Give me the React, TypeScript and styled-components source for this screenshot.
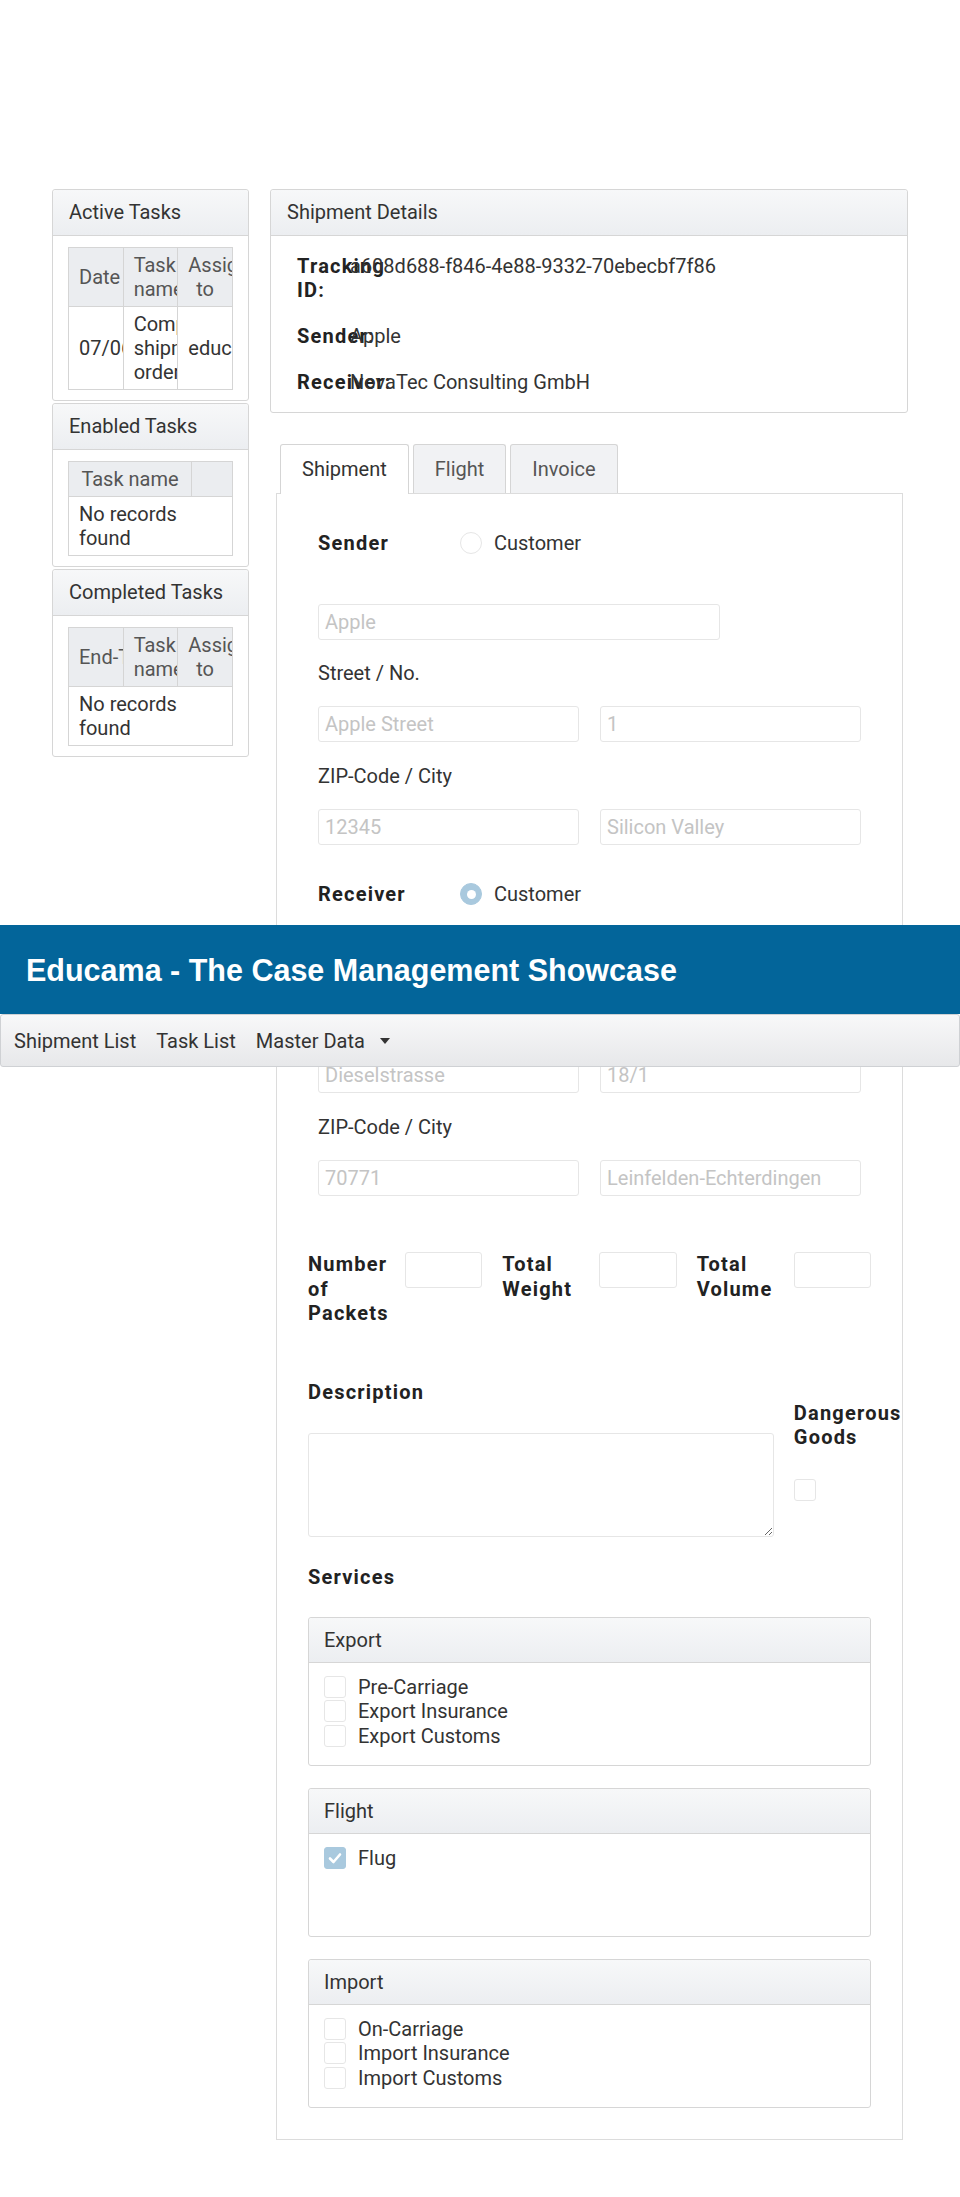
import React from "react";
import styled, { createGlobalStyle } from "styled-components";

const GlobalStyle = createGlobalStyle`
  html, body { margin: 0; padding: 0; background: #fff; }
  body {
    font-family: Roboto, "Liberation Sans", Arial, sans-serif;
    font-size: 20px;
    line-height: 24px;
    color: #333;
  }
  * { box-sizing: border-box; }
`;

const Page = styled.div`
  position: relative;
  min-height: 2197px;
  padding: 189px 52px 57px;
  display: grid;
  grid-template-columns: 197px 1fr;
  column-gap: 21px;
  align-items: start;
`;

const SideColumn = styled.div`
  display: flex;
  flex-direction: column;
  gap: 2px;
`;

const MainColumn = styled.div`
  display: flex;
  flex-direction: column;
`;

const Panel = styled.section`
  border: 1px solid #d6d6d6;
  border-radius: 3px;
  background: #fff;
`;

const PanelHeader = styled.div`
  padding: 10px 16px 11px;
  background: linear-gradient(#f7f8f9, #eceef1);
  border-bottom: 1px solid #d6d6d6;
  border-radius: 3px 3px 0 0;
  color: #333;
`;

const PanelBody = styled.div`
  padding: 11px 15px 10px;
`;

const TaskTable = styled.table`
  width: 100%;
  table-layout: fixed;
  border-collapse: collapse;
`;

const Col = styled.col<{ $w: string }>`
  width: ${(p) => p.$w};
`;

const Th = styled.th<{ $nowrap?: boolean }>`
  background: #ebedf0;
  color: #555;
  font-weight: normal;
  text-align: center;
  vertical-align: middle;
  padding: 5px 10px;
  border: 1px solid #d5d5d5;
  overflow: hidden;
  white-space: ${(p) => (p.$nowrap ? "nowrap" : "normal")};
`;

const Td = styled.td`
  color: #333;
  text-align: left;
  vertical-align: middle;
  padding: 5px 10px;
  border: 1px solid #d5d5d5;
  overflow: hidden;
`;

const DetailsGrid = styled.dl`
  margin: 0;
  padding: 7px 26px;
  display: grid;
  grid-template-columns: 53px 1fr;
`;

const DetailLabel = styled.dt`
  font-weight: 700;
  letter-spacing: 1.2px;
  color: #222;
  padding: 11px 0;
`;

const DetailValue = styled.dd`
  margin: 0;
  padding: 11px 0;
  color: #333;
`;

const TabView = styled.div`
  margin: 31px 5px 0 6px;
`;

const TabList = styled.div`
  display: flex;
  gap: 4px;
  padding-left: 4px;
`;

const Tab = styled.div<{ $active?: boolean }>`
  position: relative;
  z-index: 1;
  padding: 12px 21px ${(p) => (p.$active ? "13px" : "12px")};
  margin-bottom: ${(p) => (p.$active ? "-1px" : "0")};
  border: 1px solid #d5d5d5;
  border-bottom: none;
  border-radius: 3px 3px 0 0;
  background: ${(p) => (p.$active ? "#fff" : "#f1f2f4")};
  color: ${(p) => (p.$active ? "#333" : "#555")};
`;

const TabPanel = styled.div`
  border: 1px solid #dcdcdc;
  padding: 31px;
  display: flex;
  flex-direction: column;
`;

const PartyBlock = styled.div<{ $top?: number }>`
  padding: 0 10px;
  margin-top: ${(p) => p.$top ?? 0}px;
  display: flex;
  flex-direction: column;
`;

const PartyRow = styled.div`
  height: 36px;
  display: flex;
  align-items: center;
`;

const BoldLabel = styled.span`
  font-weight: 700;
  letter-spacing: 1.2px;
  color: #222;
`;

const PartyLabel = styled(BoldLabel)`
  width: 142px;
`;

const Radio = styled.span<{ $checked?: boolean }>`
  width: 22px;
  height: 22px;
  border-radius: 50%;
  border: 1px solid ${(p) => (p.$checked ? "#a9c9de" : "#e6e6e6")};
  background: ${(p) => (p.$checked ? "#a9c9de" : "#fff")};
  margin-right: 12px;
  display: inline-flex;
  align-items: center;
  justify-content: center;
  &::after {
    content: "";
    display: ${(p) => (p.$checked ? "block" : "none")};
    width: 9px;
    height: 9px;
    border-radius: 50%;
    background: #fff;
  }
`;

const TextField = styled.input<{ $w?: number; $top?: number }>`
  display: block;
  width: ${(p) => (p.$w ? `${p.$w}px` : "100%")};
  min-width: 0;
  height: 36px;
  margin: ${(p) => p.$top ?? 0}px 0 0;
  padding: 0 6px;
  border: 1px solid #e6e6e6;
  border-radius: 3px;
  background: #fff;
  font: inherit;
  color: #c4c4c4;
  outline: none;
`;

const FieldLabel = styled.div<{ $top: number }>`
  margin-top: ${(p) => p.$top}px;
  color: #333;
`;

const InputPair = styled.div`
  margin-top: 21px;
  display: grid;
  grid-template-columns: 1fr 1fr;
  column-gap: 21px;
`;

const SixGrid = styled.div<{ $top: number }>`
  margin-top: ${(p) => p.$top}px;
  display: grid;
  grid-template-columns: repeat(6, minmax(0, 1fr));
  column-gap: 20px;
  align-items: start;
`;

const GridLabel = styled(BoldLabel)`
  display: block;
  line-height: 24.5px;
  white-space: normal;
`;

const DescCell = styled.div`
  grid-column: span 5;
  display: flex;
  flex-direction: column;
  min-width: 0;
`;

const DescArea = styled.textarea`
  margin-top: 29px;
  height: 104px;
  width: 100%;
  border: 1px solid #e6e6e6;
  border-radius: 3px;
  font: inherit;
  resize: both;
  outline: none;
`;

const DangerCell = styled.div`
  padding-top: 21px;
  display: flex;
  flex-direction: column;
  align-items: flex-start;
  min-width: 0;
`;

const DangerLabel = styled(BoldLabel)`
  display: block;
  line-height: 24px;
`;

const Box = styled.span<{ $checked?: boolean; $top?: number }>`
  width: 22px;
  height: 22px;
  flex: none;
  margin-top: ${(p) => p.$top ?? 0}px;
  border: 1px solid ${(p) => (p.$checked ? "#a9c9de" : "#e6e6e6")};
  border-radius: 3px;
  background: ${(p) => (p.$checked ? "#a9c9de" : "#fff")};
  display: inline-flex;
  align-items: center;
  justify-content: center;
`;

const SectionTitle = styled(BoldLabel)<{ $top: number }>`
  display: block;
  margin-top: ${(p) => p.$top}px;
`;

const ServiceList = styled.div`
  margin-top: 28px;
  display: flex;
  flex-direction: column;
  gap: 22px;
`;

const ServicePanel = styled.section`
  border: 1px solid #d6d6d6;
  border-radius: 3px;
`;

const ServiceHeader = styled.div`
  padding: 10px 15px;
  background: linear-gradient(#f7f8f9, #eceef1);
  border-bottom: 1px solid #d6d6d6;
  border-radius: 3px 3px 0 0;
  color: #333;
`;

const ServiceBody = styled.div`
  min-height: 102px;
  padding: 12px 15px;
`;

const CheckItem = styled.label`
  display: flex;
  align-items: center;
  gap: 12px;
  line-height: 24.5px;
  color: #333;
`;

const TopBar = styled.header`
  position: absolute;
  top: 925px;
  left: 0;
  width: 100%;
`;

const TitleBar = styled.div`
  height: 89px;
  background: #03659a;
  display: flex;
  align-items: center;
  padding-left: 26px;
`;

const Title = styled.h1`
  margin: 0;
  font-family: "Liberation Sans", Arial, sans-serif;
  font-weight: 700;
  font-size: 30.5px;
  line-height: 36px;
  color: #fff;
`;

const NavBar = styled.nav`
  height: 53px;
  border: 1px solid #cfd1d4;
  border-radius: 3px;
  background: linear-gradient(#f8f8f9, #e7e8ea);
  display: flex;
  align-items: center;
  padding-left: 3px;
`;

const NavItem = styled.span`
  padding: 0 10px;
  color: #333;
  display: inline-flex;
  align-items: center;
`;

const Caret = styled.span`
  margin-left: 15px;
  width: 0;
  height: 0;
  border-left: 5px solid transparent;
  border-right: 5px solid transparent;
  border-top: 6px solid #333;
`;

const Check = () => (
  <svg width="16" height="16" viewBox="0 0 16 16" aria-hidden="true">
    <path d="M3 8.5 L6.5 12 L13 4.5" fill="none" stroke="#fff" strokeWidth="2.6" strokeLinecap="round" strokeLinejoin="round" />
  </svg>
);

type Party = {
  label: string;
  checked?: boolean;
  name: string;
  street: string;
  no: string;
  zip: string;
  city: string;
};

const PartySection = ({ p, top }: { p: Party; top?: number }) => (
  <PartyBlock $top={top}>
    <PartyRow>
      <PartyLabel>{p.label}</PartyLabel>
      <Radio $checked={p.checked} />
      <span>Customer</span>
    </PartyRow>
    <TextField readOnly value={p.name} $w={402} $top={43} />
    <FieldLabel $top={21}>Street / No.</FieldLabel>
    <InputPair>
      <TextField readOnly value={p.street} />
      <TextField readOnly value={p.no} />
    </InputPair>
    <FieldLabel $top={22}>ZIP-Code / City</FieldLabel>
    <InputPair>
      <TextField readOnly value={p.zip} />
      <TextField readOnly value={p.city} />
    </InputPair>
  </PartyBlock>
);

const services = [
  { title: "Export", items: [["Pre-Carriage", false], ["Export Insurance", false], ["Export Customs", false]] },
  { title: "Flight", items: [["Flug", true]] },
  { title: "Import", items: [["On-Carriage", false], ["Import Insurance", false], ["Import Customs", false]] },
] as const;

export default function App() {
  return (
    <>
      <GlobalStyle />
      <Page>
        <SideColumn>
          <Panel>
            <PanelHeader>Active Tasks</PanelHeader>
            <PanelBody>
              <TaskTable>
                <thead>
                  <tr>
                    <Th>Date</Th>
                    <Th>Task name</Th>
                    <Th>Assigned to</Th>
                  </tr>
                </thead>
                <tbody>
                  <tr>
                    <Td>07/06/2017</Td>
                    <Td>Complete shipment order</Td>
                    <Td>educama</Td>
                  </tr>
                </tbody>
              </TaskTable>
            </PanelBody>
          </Panel>
          <Panel>
            <PanelHeader>Enabled Tasks</PanelHeader>
            <PanelBody>
              <TaskTable>
                <colgroup>
                  <Col $w="75%" />
                  <Col $w="25%" />
                </colgroup>
                <thead>
                  <tr>
                    <Th>Task name</Th>
                    <Th></Th>
                  </tr>
                </thead>
                <tbody>
                  <tr>
                    <Td colSpan={2}>No records found</Td>
                  </tr>
                </tbody>
              </TaskTable>
            </PanelBody>
          </Panel>
          <Panel>
            <PanelHeader>Completed Tasks</PanelHeader>
            <PanelBody>
              <TaskTable>
                <thead>
                  <tr>
                    <Th $nowrap>End-Time</Th>
                    <Th>Task name</Th>
                    <Th>Assigned to</Th>
                  </tr>
                </thead>
                <tbody>
                  <tr>
                    <Td colSpan={3}>No records found</Td>
                  </tr>
                </tbody>
              </TaskTable>
            </PanelBody>
          </Panel>
        </SideColumn>

        <MainColumn>
          <Panel>
            <PanelHeader>Shipment Details</PanelHeader>
            <DetailsGrid>
              <DetailLabel>Tracking ID:</DetailLabel>
              <DetailValue>a608d688-f846-4e88-9332-70ebecbf7f86</DetailValue>
              <DetailLabel>Sender:</DetailLabel>
              <DetailValue>Apple</DetailValue>
              <DetailLabel>Receiver:</DetailLabel>
              <DetailValue>NovaTec Consulting GmbH</DetailValue>
            </DetailsGrid>
          </Panel>

          <TabView>
            <TabList>
              <Tab $active>Shipment</Tab>
              <Tab>Flight</Tab>
              <Tab>Invoice</Tab>
            </TabList>
            <TabPanel>
              <PartySection
                p={{ label: "Sender", name: "Apple", street: "Apple Street", no: "1", zip: "12345", city: "Silicon Valley" }}
              />
              <PartySection
                top={31}
                p={{
                  label: "Receiver",
                  checked: true,
                  name: "NovaTec Consulting GmbH",
                  street: "Dieselstrasse",
                  no: "18/1",
                  zip: "70771",
                  city: "Leinfelden-Echterdingen",
                }}
              />

              <SixGrid $top={56}>
                <GridLabel>Number of Packets</GridLabel>
                <TextField />
                <GridLabel>Total Weight</GridLabel>
                <TextField />
                <GridLabel>Total Volume</GridLabel>
                <TextField />
              </SixGrid>

              <SixGrid $top={54}>
                <DescCell>
                  <BoldLabel>Description</BoldLabel>
                  <DescArea />
                </DescCell>
                <DangerCell>
                  <DangerLabel>Dangerous Goods</DangerLabel>
                  <Box $top={30} />
                </DangerCell>
              </SixGrid>

              <SectionTitle $top={28}>Services</SectionTitle>

              <ServiceList>
                {services.map((s) => (
                  <ServicePanel key={s.title}>
                    <ServiceHeader>{s.title}</ServiceHeader>
                    <ServiceBody>
                      {s.items.map(([label, checked]) => (
                        <CheckItem key={label}>
                          <Box $checked={checked}>{checked ? <Check /> : null}</Box>
                          {label}
                        </CheckItem>
                      ))}
                    </ServiceBody>
                  </ServicePanel>
                ))}
              </ServiceList>
            </TabPanel>
          </TabView>
        </MainColumn>

        <TopBar>
          <TitleBar>
            <Title>Educama - The Case Management Showcase</Title>
          </TitleBar>
          <NavBar>
            <NavItem>Shipment List</NavItem>
            <NavItem>Task List</NavItem>
            <NavItem>
              Master Data
              <Caret />
            </NavItem>
          </NavBar>
        </TopBar>
      </Page>
    </>
  );
}
